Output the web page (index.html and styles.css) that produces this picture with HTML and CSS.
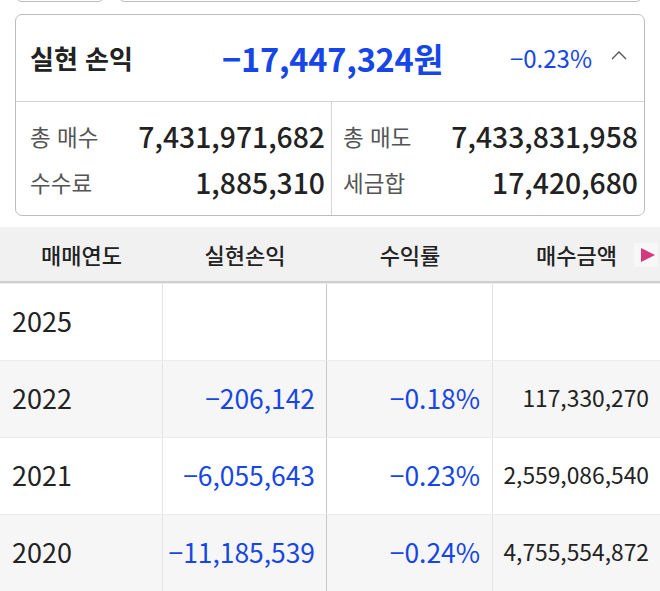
FILE: index.html
```html
<!DOCTYPE html>
<html lang="ko">
<head>
<meta charset="utf-8">
<link rel="stylesheet" href="styles.css">
</head>
<body>
<div class="page">
  <div class="top-row">
    <div class="top-box small"></div>
    <div class="top-box wide"></div>
  </div>

  <section class="card">
    <div class="card-head">
      <span class="title">실현 손익</span>
      <span class="big-value">−17,447,324원</span>
      <span class="rate">−0.23%</span>
      <svg class="chev" width="18" height="12" viewBox="0 0 18 12"><path d="M2 10 L9 3 L16 10" fill="none" stroke="#555" stroke-width="1.4"/></svg>
    </div>
    <div class="card-body">
      <div class="col">
        <div class="kv"><span class="k">총 매수</span><span class="v">7,431,971,682</span></div>
        <div class="kv"><span class="k">수수료</span><span class="v">1,885,310</span></div>
      </div>
      <div class="col right">
        <div class="kv"><span class="k">총 매도</span><span class="v">7,433,831,958</span></div>
        <div class="kv"><span class="k">세금합</span><span class="v">17,420,680</span></div>
      </div>
    </div>
  </section>

  <div class="table">
    <div class="thead">
      <div class="th c1">매매연도</div>
      <div class="th c2">실현손익</div>
      <div class="th c3">수익률</div>
      <div class="th c4">매수금액<span class="tri-box"><span class="tri"></span></span></div>
    </div>
    <div class="tr">
      <div class="td c1 year">2025</div>
      <div class="td c2"></div>
      <div class="td c3"></div>
      <div class="td c4"></div>
    </div>
    <div class="tr alt">
      <div class="td c1 year">2022</div>
      <div class="td c2 neg">−206,142</div>
      <div class="td c3 neg">−0.18%</div>
      <div class="td c4 amt">117,330,270</div>
    </div>
    <div class="tr">
      <div class="td c1 year">2021</div>
      <div class="td c2 neg">−6,055,643</div>
      <div class="td c3 neg">−0.23%</div>
      <div class="td c4 amt">2,559,086,540</div>
    </div>
    <div class="tr alt">
      <div class="td c1 year">2020</div>
      <div class="td c2 neg">−11,185,539</div>
      <div class="td c3 neg">−0.24%</div>
      <div class="td c4 amt">4,755,554,872</div>
    </div>
  </div>
</div>
</body>
</html>
```

FILE: styles.css
```css
* { box-sizing: border-box; }
html, body { margin: 0; padding: 0; background: #fff; }
body {
  font-family: "Noto Sans CJK KR", "Noto Sans", sans-serif;
  color: #222;
  width: 660px;
  height: 591px;
  overflow: hidden;
}
.page { display: flex; flex-direction: column; }

.top-row {
  display: flex;
  gap: 13px;
  padding: 0 15px;
  margin-top: -30px;
  height: 32px;
}
.top-box {
  border: 1.5px solid #bdbdbd;
  border-radius: 7px;
  height: 32px;
  background: #fff;
}
.top-box.small { width: 90px; }
.top-box.wide { flex: 1; margin-right: 2px; }

.card {
  margin: 12px 15px 0 15px;
  border: 1.5px solid #bdbdbd;
  border-radius: 7px;
  height: 202px;
  display: flex;
  flex-direction: column;
  overflow: hidden;
}
.card-head {
  height: 87px;
  display: flex;
  align-items: center;
  padding: 0 16px 2px 14px;
  border-bottom: 1.5px solid #d4d4d4;
}
.title {
  font-size: 26px;
  font-weight: 700;
  color: #222;
  width: 192px;
}
.big-value {
  font-size: 32.5px;
  font-weight: 700;
  color: #1646e6;
  letter-spacing: -0.2px;
}
.rate {
  margin-left: auto;
  font-size: 24px;
  color: #1646e6;
}
.chev { margin-left: 18px; margin-top: -4px; }

.card-body {
  flex: 1;
  display: grid;
  grid-template-columns: 315px 1fr;
}
.col {
  display: flex;
  flex-direction: column;
  justify-content: center;
  gap: 8px;
  padding: 0 6px 0 14px;
}
.col.right {
  border-left: 1.5px solid #d4d4d4;
  padding-left: 11px;
  padding-right: 6px;
}
.kv {
  display: flex;
  justify-content: space-between;
  align-items: center;
  height: 38px;
}
.k { font-size: 22.5px; color: #555; }
.v { font-size: 28.3px; font-weight: 500; color: #222; }

.table {
  margin-top: 11px;
  display: flex;
  flex-direction: column;
}
.thead, .tr {
  display: grid;
  grid-template-columns: 163px 164px 166px 167px;
}
.thead {
  height: 56px;
  background: #f1f1f1;
  border-bottom: 2px solid #cfcfcf;
}
.th {
  display: flex;
  align-items: center;
  justify-content: center;
  font-size: 22px;
  font-weight: 500;
  color: #222;
}
.th.c4 { position: relative; }
.tri-box {
  position: absolute;
  right: 2px;
  top: 16px;
  width: 24px;
  height: 24px;
  background: #f7f7f7;
  display: flex;
  align-items: center;
  justify-content: center;
}
.tri {
  width: 0; height: 0;
  margin-left: 4px;
  border-top: 7.5px solid transparent;
  border-bottom: 7.5px solid transparent;
  border-left: 14px solid #d6387c;
}
.tr { height: 77px; background: #fff; border-top: 1px solid #ececec; }
.tr:first-of-type { border-top: none; }
.tr.alt { background: #f6f6f6; }
.td {
  display: flex;
  align-items: center;
  justify-content: flex-end;
  font-size: 26.4px;
  padding-right: 11px;
  padding-bottom: 4px;
  border-right: 1px solid #e4e4e4;
}
.td.c2 { border-right: 1.5px solid #c8c8c8; }
.td.c3 { padding-right: 12px; }
.td.c4 { border-right: none; padding-right: 11px; }
.td.year { justify-content: flex-start; padding-left: 12px; font-size: 27px; }
.neg { color: #1646e6; }
.amt { font-size: 22.8px; color: #222; }
```
